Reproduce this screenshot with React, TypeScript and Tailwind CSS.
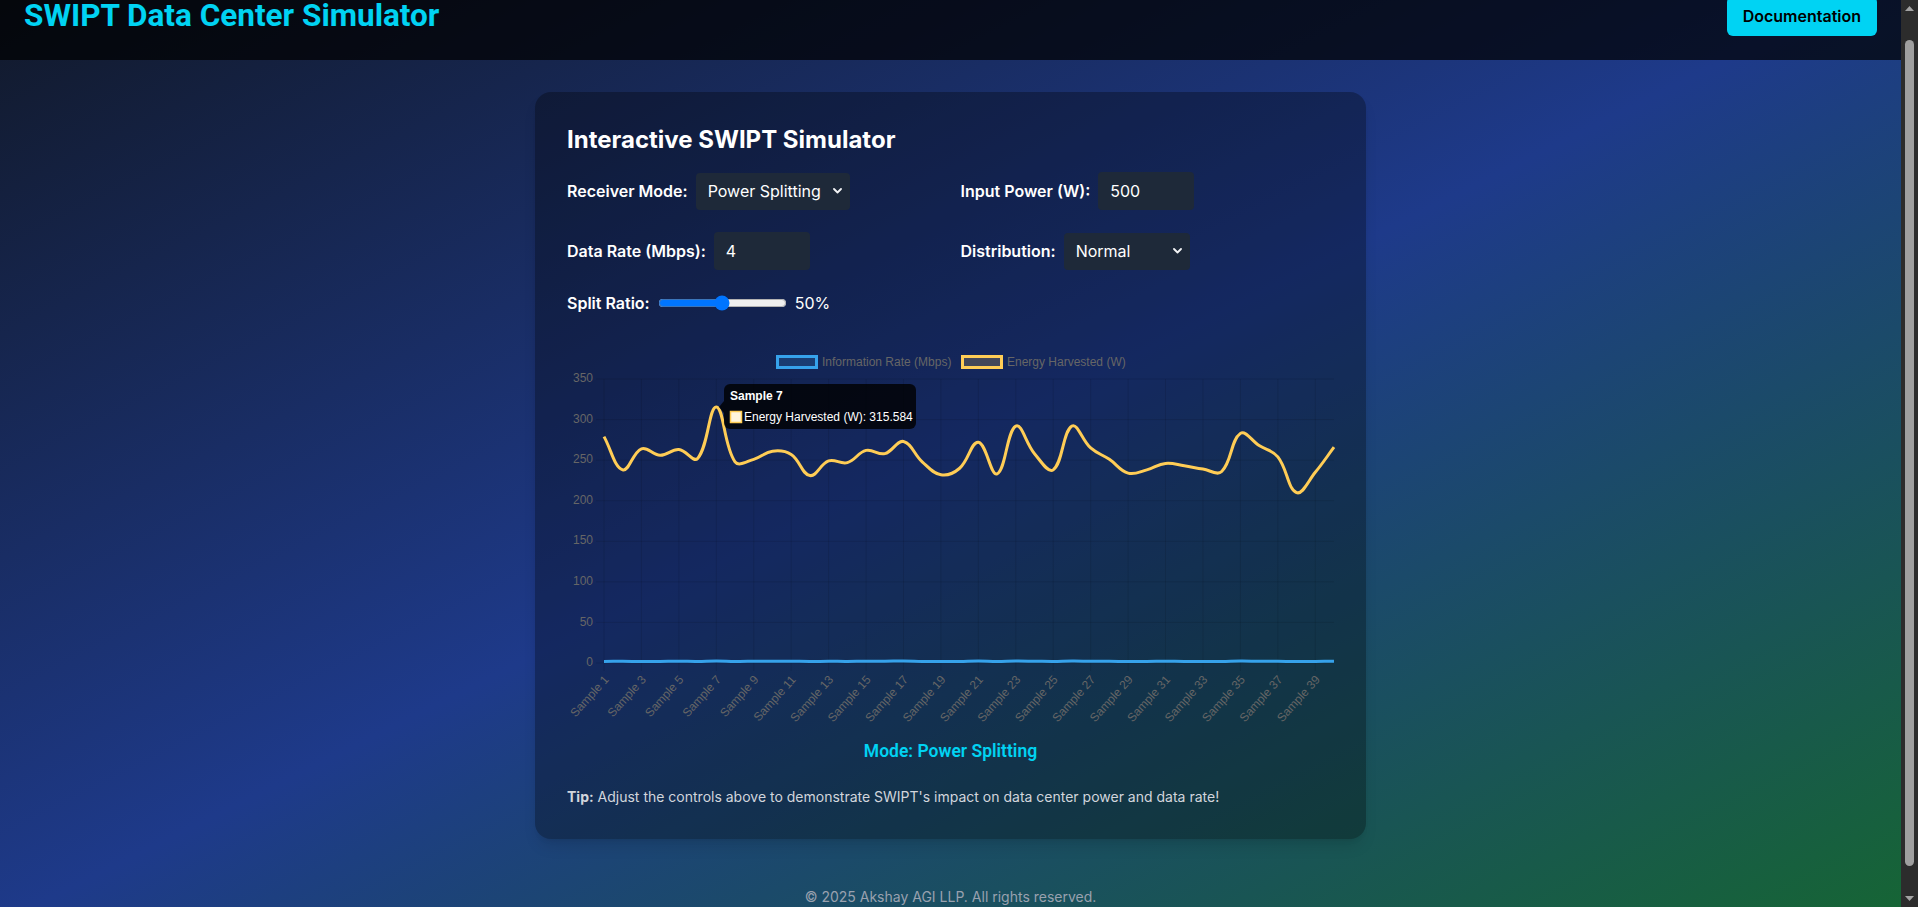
import { useLayoutEffect, useRef } from 'react'

type Pt = { x: number; y: number }

// energy harvested per sample (W)
const energy = [
  279, 238, 264, 256, 263, 252, 315.584, 248, 251, 261, 257, 231, 249, 247, 262, 258, 273, 248, 232, 240,
  272, 233, 292, 258, 238, 292, 265, 251, 234, 238, 246, 243, 239, 236, 283, 268, 254, 210, 235, 266,
]

// information rate per sample (Mbps)
const info = [
  2, 2.1, 1.9, 2, 2.2, 2, 2.6, 2, 2.1, 2.3, 2.2, 1.9, 2.1, 2, 2.3, 2.2, 2.5, 2, 1.8, 1.9,
  2.4, 1.9, 2.4, 2.2, 1.9, 2.4, 2.2, 2.1, 1.9, 2, 2.1, 2, 1.9, 1.9, 2.4, 2.2, 2.1, 1.7, 1.9, 2.3,
]

const CHART_W = 767
const CHART_H = 402
const PLOT_L = 37
const PLOT_R = 767
const PLOT_T = 44
const PLOT_B = 328

const xAt = (i: number) => PLOT_L + (i * (PLOT_R - PLOT_L)) / 39
const yAt = (v: number) => PLOT_B - (v * (PLOT_B - PLOT_T)) / 350

// same spline chart.js uses for tension 0.4
function smoothPath(pts: Pt[], t = 0.4) {
  const cps = pts.map((cur, i) => {
    const prev = pts[i - 1] ?? cur
    const next = pts[i + 1] ?? cur
    const d01 = Math.hypot(cur.x - prev.x, cur.y - prev.y)
    const d12 = Math.hypot(next.x - cur.x, next.y - cur.y)
    let s01 = d01 / (d01 + d12)
    let s12 = d12 / (d01 + d12)
    if (isNaN(s01)) s01 = 0
    if (isNaN(s12)) s12 = 0
    const fa = t * s01
    const fb = t * s12
    return {
      prev: { x: cur.x - fa * (next.x - prev.x), y: cur.y - fa * (next.y - prev.y) },
      next: { x: cur.x + fb * (next.x - prev.x), y: cur.y + fb * (next.y - prev.y) },
    }
  })
  let d = `M${pts[0].x},${pts[0].y}`
  for (let i = 1; i < pts.length; i++) {
    const a = cps[i - 1].next
    const b = cps[i].prev
    d += ` C${a.x},${a.y} ${b.x},${b.y} ${pts[i].x},${pts[i].y}`
  }
  return d
}

function SwiptChart() {
  const energyPath = smoothPath(energy.map((v, i) => ({ x: xAt(i), y: yAt(v) })))
  const infoPath = smoothPath(info.map((v, i) => ({ x: xAt(i), y: yAt(v) })))
  const yTicks = [0, 50, 100, 150, 200, 250, 300, 350]
  const xTicks = Array.from({ length: 20 }, (_, k) => k * 2)
  const font = "'Liberation Sans', Arial, sans-serif"

  return (
    <svg width={CHART_W} height={CHART_H} className="block overflow-visible" fontFamily={font} fontSize={12}>
      {/* legend */}
      <rect x={210.5} y={21.5} width={39} height={11} fill="rgba(54,162,235,0.2)" stroke="#36a2eb" strokeWidth={3} />
      <text x={255} y={31} fill="#666">Information Rate (Mbps)</text>
      <rect x={395.5} y={21.5} width={39} height={11} fill="rgba(255,205,86,0.2)" stroke="#ffcd56" strokeWidth={3} />
      <text x={440} y={31} fill="#666">Energy Harvested (W)</text>

      {/* grid */}
      {yTicks.map((v) => (
        <line key={v} x1={29} x2={PLOT_R} y1={yAt(v)} y2={yAt(v)} stroke="rgba(0,0,0,0.1)" />
      ))}
      {xTicks.map((i) => (
        <line key={i} x1={xAt(i)} x2={xAt(i)} y1={PLOT_T} y2={PLOT_B + 8} stroke="rgba(0,0,0,0.1)" />
      ))}

      {/* y labels */}
      {yTicks.map((v) => (
        <text key={v} x={26} y={yAt(v)} textAnchor="end" dominantBaseline="middle" fill="#666">
          {v}
        </text>
      ))}

      {/* x labels */}
      {xTicks.map((i) => (
        <text
          key={i}
          transform={`translate(${xAt(i) + 3},${PLOT_B + 15}) rotate(-48)`}
          textAnchor="end"
          dominantBaseline="middle"
          fill="#666"
        >
          Sample {i + 1}
        </text>
      ))}

      <path d={infoPath} fill="none" stroke="#36a2eb" strokeWidth={3} />
      <path d={energyPath} fill="none" stroke="#ffcd56" strokeWidth={3} />

      {/* tooltip on sample 7 */}
      <path d="M157,66 L152,72 L157,78 Z" fill="rgba(0,0,0,0.8)" />
      <rect x={157} y={49} width={192} height={45} rx={6} fill="rgba(0,0,0,0.8)" />
      <text x={163} y={65} fill="#fff" fontWeight="bold">
        Sample 7
      </text>
      <rect x={163.5} y={76.5} width={11} height={11} fill="#fff5dd" stroke="#ffcd56" strokeWidth={1.5} />
      <text x={177} y={86} fill="#fff">
        Energy Harvested (W): 315.584
      </text>
    </svg>
  )
}

function Chevron() {
  return (
    <svg width="9" height="6" viewBox="0 0 9 6" className="pointer-events-none absolute right-2 top-1/2 -translate-y-1/2">
      <path d="M1 1l3.5 3.5L8 1" fill="none" stroke="#f3f4f6" strokeWidth="1.8" strokeLinecap="round" strokeLinejoin="round" />
    </svg>
  )
}

function ScrollBar() {
  return (
    <div className="flex h-screen w-[17px] shrink-0 flex-col items-center bg-[#2c2c2c]">
      <div className="flex h-[17px] items-center justify-center">
        <svg width="9" height="5" viewBox="0 0 9 5">
          <path d="M0 5L4.5 0L9 5Z" fill="#a3a3a3" />
        </svg>
      </div>
      <div className="mt-[23px] h-[826px] w-[9px] rounded-full bg-[#9f9f9f]" />
      <div className="flex-1" />
      <div className="flex h-[17px] items-center justify-center">
        <svg width="9" height="5" viewBox="0 0 9 5">
          <path d="M0 0L4.5 5L9 0Z" fill="#a3a3a3" />
        </svg>
      </div>
    </div>
  )
}

export default function App() {
  const scroller = useRef<HTMLDivElement>(null)

  useLayoutEffect(() => {
    if (scroller.current) scroller.current.scrollTop = 28
  }, [])

  return (
    <div className="flex h-screen font-['Inter',sans-serif] text-white">
      <div ref={scroller} className="h-screen flex-1 overflow-y-auto [scrollbar-width:none]">
        <div className="min-h-full bg-linear-to-br/srgb from-[#111827] via-[#1e3a8a] to-[#166534]">
          <header className="flex items-center justify-between bg-black/70 px-6 py-6">
            <h1 className="font-['Roboto',sans-serif] text-[31.5px] font-bold leading-none text-cyan-400">
              SWIPT Data Center Simulator
            </h1>
            <button className="h-10 rounded-md bg-cyan-400 px-4 text-base font-semibold text-black">Documentation</button>
          </header>

          <main className="px-6 py-8">
            <div className="mx-auto w-[831px] rounded-2xl bg-black/30 p-8 shadow-lg">
              <h2 className="mb-4 text-2xl font-bold">Interactive SWIPT Simulator</h2>

              <div className="grid grid-cols-2 gap-x-5 gap-y-[22px]">
                <div className="flex items-center gap-2">
                  <label className="font-semibold">Receiver Mode:</label>
                  <div className="relative">
                    <select
                      defaultValue="ps"
                      className="block h-[37px] w-[154px] appearance-none rounded bg-gray-800 pl-3 pr-6 text-white"
                    >
                      <option value="ps">Power Splitting</option>
                      <option value="ts">Time Switching</option>
                    </select>
                    <Chevron />
                  </div>
                </div>
                <div className="flex items-center gap-2">
                  <label className="font-semibold">Input Power (W):</label>
                  <input type="number" defaultValue={500} className="h-[38px] w-24 rounded bg-gray-800 px-3 text-white" />
                </div>
                <div className="flex items-center gap-2">
                  <label className="font-semibold">Data Rate (Mbps):</label>
                  <input type="number" defaultValue={4} className="h-[38px] w-24 rounded bg-gray-800 px-3 text-white" />
                </div>
                <div className="flex items-center gap-2">
                  <label className="font-semibold">Distribution:</label>
                  <div className="relative">
                    <select
                      defaultValue="normal"
                      className="block h-[37px] w-[126px] appearance-none rounded bg-gray-800 pl-3 pr-6 text-white"
                    >
                      <option value="normal">Normal</option>
                      <option value="uniform">Uniform</option>
                    </select>
                    <Chevron />
                  </div>
                </div>
              </div>

              <div className="mt-[21px] flex items-center gap-2">
                <label className="font-semibold">Split Ratio:</label>
                <input type="range" min={0} max={100} defaultValue={50} className="[color-scheme:light]" />
                <span>50%</span>
              </div>

              <div className="mt-5">
                <SwiptChart />
              </div>

              <p className="text-center font-['Roboto',sans-serif] text-[17.5px] leading-7 font-semibold text-cyan-400">
                Mode: Power Splitting
              </p>

              <p className="mt-[22px] text-sm text-gray-300">
                <strong>Tip:</strong> Adjust the controls above to demonstrate SWIPT's impact on data center power and data
                rate!
              </p>
            </div>
          </main>

          <footer className="py-4 text-center text-sm text-gray-400">© 2025 Akshay AGI LLP. All rights reserved.</footer>
        </div>
      </div>
      <ScrollBar />
    </div>
  )
}
